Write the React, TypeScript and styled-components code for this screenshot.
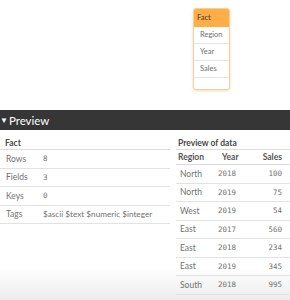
import React from "react";
import styled, { createGlobalStyle } from "styled-components";

const Global = createGlobalStyle`
  html, body { margin: 0; padding: 0; background: #fff; }
  body { font-family: Lato, "Open Sans", sans-serif; }
`;

const Page = styled.div`
  width: 290px;
  height: 300px;
  overflow: hidden;
  display: flex;
  flex-direction: column;
  background: linear-gradient(to bottom, #ffffff 0%, #ffffff 89%, #ececec 100%);
`;

const Canvas = styled.div`
  height: 110px;
  box-sizing: border-box;
  padding: 8px 0 0 193px;
`;

const TableCard = styled.div`
  width: 37px;
  height: 82px;
  box-sizing: border-box;
  border: 1px solid #f3cf9a;
  border-radius: 3px;
  background: #fff;
  box-shadow: 0 1px 3px rgba(200, 150, 80, 0.35);
  overflow: hidden;
  display: flex;
  flex-direction: column;
`;

const CardHead = styled.div`
  height: 18px;
  background: #ffad47;
  color: #3a3a3a;
  font-size: 7.5px;
  line-height: 18px;
  padding-left: 3px;
`;

const CardField = styled.div`
  height: 17px;
  box-sizing: border-box;
  border-bottom: 1px solid #e6e6e6;
  color: #707070;
  font-size: 7.5px;
  line-height: 16px;
  padding-left: 6px;
`;

const Bar = styled.div`
  height: 20px;
  background: #363636;
  color: #fff;
  display: flex;
  align-items: center;
  gap: 1px;
  font-size: 11.5px;
`;

const Caret = styled.span`
  font-size: 8px;
  line-height: 1;
`;

const Body = styled.div`
  display: flex;
  gap: 6px;
`;

const LeftPane = styled.div`
  width: 170px;
`;

const RightPane = styled.div`
  flex: 1;
`;

const Title = styled.div<{ $indent: number }>`
  box-sizing: border-box;
  height: 20px;
  padding: 8px 0 0 ${(p) => p.$indent}px;
  border-bottom: 1px solid #dcdcdc;
  font-size: 8.5px;
  line-height: 10px;
  font-weight: 700;
  color: #484848;
`;

const InfoRow = styled.div`
  box-sizing: border-box;
  height: 18.5px;
  border-bottom: 1px solid #e2e2e2;
  display: grid;
  grid-template-columns: 37px 1fr;
  align-items: center;
  padding-left: 6px;
  font-size: 8.5px;
`;

const Label = styled.span`
  color: #727272;
`;

const Mono = styled.span`
  font-family: "DejaVu Sans Mono", "Liberation Mono", monospace;
  font-size: 7.5px;
  color: #727272;
`;

const Tags = styled.span`
  font-size: 8.2px;
  color: #727272;
`;

const DataGrid = styled.div`
  display: grid;
  grid-template-columns: 41px 36px 1fr;
`;

const HeadCell = styled.div<{ $align: string; $pad: number }>`
  box-sizing: border-box;
  height: 15px;
  border-bottom: 1px solid #dcdcdc;
  font-size: 8.5px;
  font-weight: 700;
  color: #555;
  display: flex;
  align-items: center;
  justify-content: ${(p) => p.$align};
  padding: ${(p) => (p.$align === "flex-end" ? `0 ${p.$pad}px 0 0` : `0 0 0 ${p.$pad}px`)};
`;

const Cell = styled.div<{ $align: string; $pad: number; $mono?: boolean }>`
  box-sizing: border-box;
  height: 18.5px;
  border-bottom: 1px solid #e2e2e2;
  display: flex;
  align-items: center;
  justify-content: ${(p) => p.$align};
  padding: ${(p) => (p.$align === "flex-end" ? `0 ${p.$pad}px 0 0` : `0 0 0 ${p.$pad}px`)};
  font-family: ${(p) => (p.$mono ? `"DejaVu Sans Mono", "Liberation Mono", monospace` : `Lato, "Open Sans", sans-serif`)};
  font-size: ${(p) => (p.$mono ? "7.5px" : "8.5px")};
  color: #727272;
`;

const info = [
  { k: "Rows", v: "8", mono: true },
  { k: "Fields", v: "3", mono: true },
  { k: "Keys", v: "0", mono: true },
  { k: "Tags", v: "$ascii $text $numeric $integer", mono: false },
];

const data: [string, string, string][] = [
  ["North", "2018", "100"],
  ["North", "2019", "75"],
  ["West", "2019", "54"],
  ["East", "2017", "560"],
  ["East", "2018", "234"],
  ["East", "2019", "345"],
  ["South", "2018", "995"],
];

export default function App() {
  return (
    <Page>
      <Global />
      <Canvas>
        <TableCard>
          <CardHead>Fact</CardHead>
          <CardField>Region</CardField>
          <CardField>Year</CardField>
          <CardField>Sales</CardField>
        </TableCard>
      </Canvas>
      <Bar>
        <Caret>▼</Caret>
        <span>Preview</span>
      </Bar>
      <Body>
        <LeftPane>
          <Title $indent={5}>Fact</Title>
          {info.map((r) => (
            <InfoRow key={r.k}>
              <Label>{r.k}</Label>
              {r.mono ? <Mono>{r.v}</Mono> : <Tags>{r.v}</Tags>}
            </InfoRow>
          ))}
        </LeftPane>
        <RightPane>
          <Title $indent={2}>Preview of data</Title>
          <DataGrid>
            <HeadCell $align="flex-start" $pad={2}>Region</HeadCell>
            <HeadCell $align="flex-start" $pad={5}>Year</HeadCell>
            <HeadCell $align="flex-end" $pad={8}>Sales</HeadCell>
            {data.map((row, i) => (
              <React.Fragment key={i}>
                <Cell $align="flex-start" $pad={4}>{row[0]}</Cell>
                <Cell $align="flex-start" $pad={1} $mono>{row[1]}</Cell>
                <Cell $align="flex-end" $pad={8} $mono>{row[2]}</Cell>
              </React.Fragment>
            ))}
          </DataGrid>
        </RightPane>
      </Body>
    </Page>
  );
}
